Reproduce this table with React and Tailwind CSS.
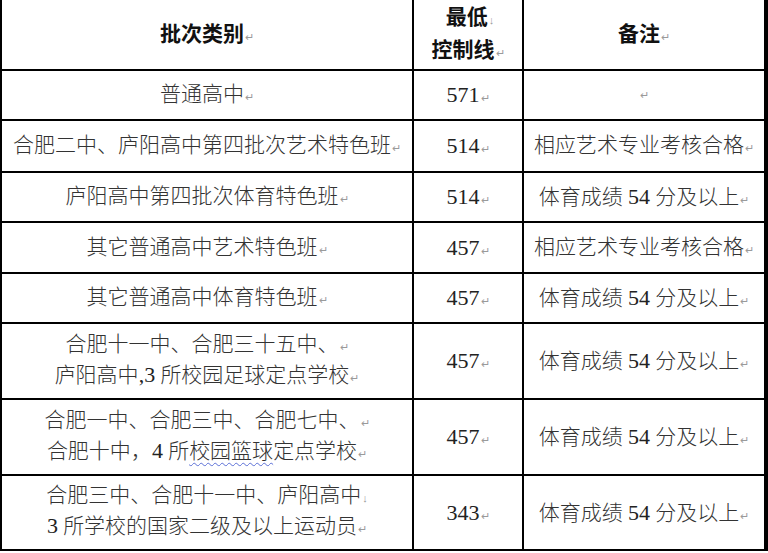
import React from "react";

const font = {
  fontFamily: '"Liberation Serif", "Times New Roman", "Noto Sans CJK SC", serif',
};

// Word paragraph / line-break marks
function Mark({ down }) {
  return (
    <span className="text-[11px] text-[#9a9a9a] align-baseline ml-px font-normal">
      {down ? "↓" : "↵"}
    </span>
  );
}

function Num({ children }) {
  return (
    <span className="font-['Liberation_Serif','Times_New_Roman',serif] font-normal text-[22px] text-[#222]">
      {children}
    </span>
  );
}

const rows = [
  { h: "h-[48px]", name: ["普通高中"], score: "571", note: null },
  { h: "h-[50px]", name: ["合肥二中、庐阳高中第四批次艺术特色班"], score: "514", note: "art" },
  { h: "h-[48px]", name: ["庐阳高中第四批次体育特色班"], score: "514", note: "pe" },
  { h: "h-[49px]", name: ["其它普通高中艺术特色班"], score: "457", note: "art" },
  { h: "h-[48px]", name: ["其它普通高中体育特色班"], score: "457", note: "pe" },
  {
    h: "h-[74px]",
    name: ["合肥十一中、合肥三十五中、", "football"],
    score: "457",
    note: "pe",
  },
  {
    h: "h-[74px]",
    name: ["合肥一中、合肥三中、合肥七中、", "basketball"],
    score: "457",
    note: "pe",
  },
  {
    h: "h-[73px]",
    name: ["合肥三中、合肥十一中、庐阳高中", "athletes"],
    score: "343",
    note: "pe",
    down: true,
  },
];

function Note({ kind }) {
  if (kind === "art") return <span>相应艺术专业考核合格<Mark /></span>;
  if (kind === "pe")
    return (
      <span>
        体育成绩 <Num>54</Num> 分及以上<Mark />
      </span>
    );
  return <Mark />;
}

function SecondLine({ kind }) {
  if (kind === "football")
    return (
      <span>
        庐阳高中<Num>,3</Num> 所校园足球定点学校<Mark />
      </span>
    );
  if (kind === "basketball")
    return (
      <span>
        合肥十中，<Num>4</Num> 所
        <span className="underline decoration-wavy decoration-[#5b6fd6] decoration-1 underline-offset-4">
          校园篮球
        </span>
        定点学校<Mark />
      </span>
    );
  return (
    <span>
      <Num>3</Num> 所学校的国家二级及以上运动员<Mark />
    </span>
  );
}

function NameCell({ row }) {
  if (row.name.length === 1) {
    return (
      <span>
        {row.name[0]}
        <Mark />
      </span>
    );
  }
  return (
    <div className="flex flex-col items-center leading-[27px]">
      <span>
        {row.name[0]}
        <Mark down={row.down} />
      </span>
      <SecondLine kind={row.name[1]} />
    </div>
  );
}

export default function App() {
  return (
    <div className="w-[768px] h-[553px] bg-white overflow-hidden" style={font}>
      <div className="grid grid-cols-[410px_108px_240px] gap-[2px] bg-black border-l-2 border-r-4 border-b-2 border-black text-[21px] text-[#333] font-light">
        {/* Header */}
        <div className="h-[69px] bg-white flex items-center justify-center font-bold text-[#111]">
          <span>
            批次类别
            <Mark />
          </span>
        </div>
        <div className="h-[69px] bg-white flex flex-col items-center justify-center font-bold text-[#111] leading-[30px]">
          <span className="pl-1">
            最低
            <Mark down />
          </span>
          <span>
            控制线
            <Mark />
          </span>
        </div>
        <div className="h-[69px] bg-white flex items-center justify-center font-bold text-[#111]">
          <span>
            备注
            <Mark />
          </span>
        </div>

        {rows.map((row, i) => (
          <React.Fragment key={i}>
            <div className={`${row.h} bg-white flex items-center justify-center`}>
              <NameCell row={row} />
            </div>
            <div className={`${row.h} bg-white flex items-center justify-center`}>
              <span>
                <Num>{row.score}</Num>
                <Mark />
              </span>
            </div>
            <div className={`${row.h} bg-white flex items-center justify-center`}>
              <Note kind={row.note} />
            </div>
          </React.Fragment>
        ))}
      </div>
    </div>
  );
}
